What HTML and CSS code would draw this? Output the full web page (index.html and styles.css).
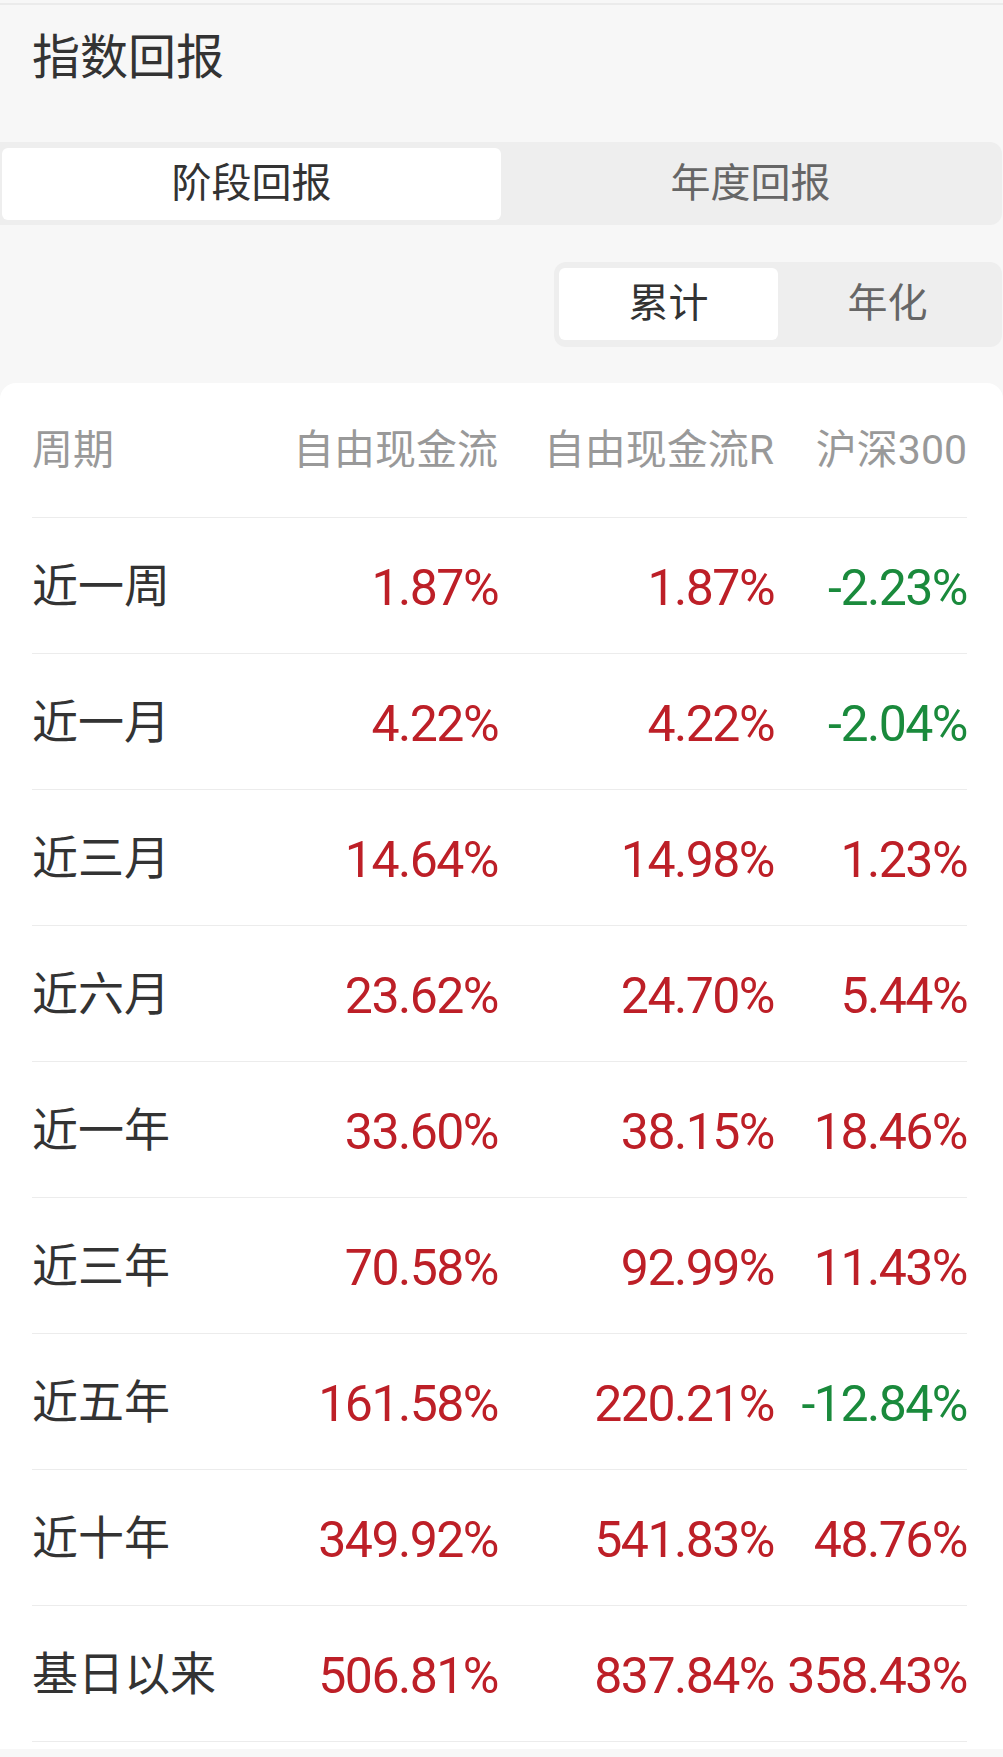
FILE: index.html
```html
<!DOCTYPE html>
<html lang="zh-CN">
<head>
<meta charset="utf-8">
<title>指数回报</title>
<link rel="stylesheet" href="styles.css">
</head>
<body>
<div class="page">
  <div class="topline"></div>
  <h1 class="title">指数回报</h1>
  <div class="seg seg-main">
    <div class="seg-item active">阶段回报</div>
    <div class="seg-item">年度回报</div>
  </div>
  <div class="sub-row">
    <div class="seg seg-sub">
      <div class="seg-item active">累计</div>
      <div class="seg-item">年化</div>
    </div>
  </div>
  <div class="card">
    <div class="row head">
      <div class="cell label">周期</div>
      <div class="cell r">自由现金流</div>
      <div class="cell r">自由现金流R</div>
      <div class="cell r">沪深300</div>
    </div>
    <div class="row">
      <div class="cell label">近一周</div>
      <div class="cell r num up">1.87%</div>
      <div class="cell r num up">1.87%</div>
      <div class="cell r num down">-2.23%</div>
    </div>
    <div class="row">
      <div class="cell label">近一月</div>
      <div class="cell r num up">4.22%</div>
      <div class="cell r num up">4.22%</div>
      <div class="cell r num down">-2.04%</div>
    </div>
    <div class="row">
      <div class="cell label">近三月</div>
      <div class="cell r num up">14.64%</div>
      <div class="cell r num up">14.98%</div>
      <div class="cell r num up">1.23%</div>
    </div>
    <div class="row">
      <div class="cell label">近六月</div>
      <div class="cell r num up">23.62%</div>
      <div class="cell r num up">24.70%</div>
      <div class="cell r num up">5.44%</div>
    </div>
    <div class="row">
      <div class="cell label">近一年</div>
      <div class="cell r num up">33.60%</div>
      <div class="cell r num up">38.15%</div>
      <div class="cell r num up">18.46%</div>
    </div>
    <div class="row">
      <div class="cell label">近三年</div>
      <div class="cell r num up">70.58%</div>
      <div class="cell r num up">92.99%</div>
      <div class="cell r num up">11.43%</div>
    </div>
    <div class="row">
      <div class="cell label">近五年</div>
      <div class="cell r num up">161.58%</div>
      <div class="cell r num up">220.21%</div>
      <div class="cell r num down">-12.84%</div>
    </div>
    <div class="row">
      <div class="cell label">近十年</div>
      <div class="cell r num up">349.92%</div>
      <div class="cell r num up">541.83%</div>
      <div class="cell r num up">48.76%</div>
    </div>
    <div class="row">
      <div class="cell label">基日以来</div>
      <div class="cell r num up">506.81%</div>
      <div class="cell r num up">837.84%</div>
      <div class="cell r num up">358.43%</div>
    </div>
  </div>
</div>
</body>
</html>
```
FILE: styles.css
```css
* { box-sizing: border-box; }
html, body {
  margin: 0;
  padding: 0;
  background: #f7f7f7;
}
body {
  width: 1003px;
  min-height: 1757px;
  font-family: "Roboto", "Noto Sans CJK SC", sans-serif;
  color: #333;
}
.topline {
  height: 2px;
  margin-top: 3px;
  background: #ebebeb;
}
.title {
  margin: 23px 0 0 32px;
  font-size: 48px;
  line-height: 60px;
  font-weight: 400;
  color: #333;
}
.seg {
  display: flex;
  background: #eeeeee;
}
.seg-main {
  margin-top: 54px;
  margin-right: 1px;
  padding: 6px 2px 5px 2px;
  border-radius: 0 12px 12px 0;
}
.sub-row {
  display: flex;
  justify-content: flex-end;
  margin-top: 37px;
  padding-right: 1px;
}
.seg-sub {
  width: 448px;
  padding: 6px 5px 7px 5px;
  border-radius: 12px;
}
.seg-item {
  flex: 1;
  height: 72px;
  line-height: 72px;
  text-align: center;
  font-size: 40px;
  color: #666;
  border-radius: 6px;
}
.seg-item.active {
  background: #fff;
  color: #333;
}
.card {
  margin-top: 36px;
  background: #fff;
  border-radius: 16px 16px 0 0;
  padding: 0 36px 7px 32px;
}
.row {
  display: grid;
  grid-template-columns: 200px 266px 276px 193px;
  align-items: center;
  height: 136px;
  border-bottom: 1px solid #ececec;
}
.row.head {
  height: 135px;
}
.cell {
  font-size: 46px;
  line-height: 56px;
  white-space: nowrap;
  color: #333;
}
.head .cell {
  font-size: 41px;
  color: #999;
}
.r { text-align: right; }
.num {
  font-size: 50px;
  letter-spacing: -1.5px;
  padding-top: 4px;
}
.up { color: #bd1f27; }
.down { color: #1a8a3c; }
```
